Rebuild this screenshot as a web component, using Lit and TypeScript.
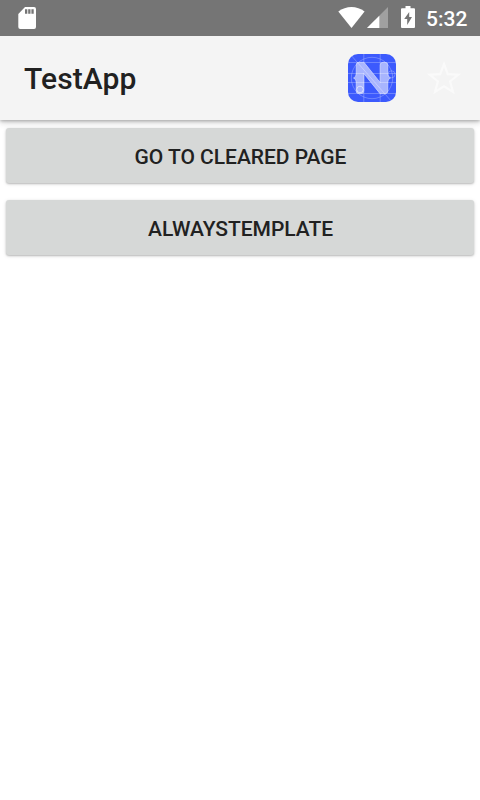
import { LitElement, html, css } from "lit";
import { customElement } from "lit/decorators.js";

@customElement("status-bar")
class StatusBar extends LitElement {
  static styles = css`
    :host {
      display: flex;
      height: 36px;
      box-sizing: border-box;
      background: #757575;
      color: #fff;
      padding: 0 12px 0 18px;
      font: 500 21px/38px Roboto, sans-serif;
    }
    svg { display: block; flex: none; height: 36px; }
    .space { flex: 1; }
    .time { width: 42px; white-space: nowrap; }
    .battery { margin: 0 11px 0 13px; }
    .signal { margin-left: 2px; }
  `;
  render() {
    return html`
      <svg width="18" height="36" viewBox="0 0 18 36">
        <path fill="#fff" fill-rule="evenodd" d="M7 7H16Q18 7 18 9V27Q18 29 16 29H2.300Q.3 29 .3 27V14ZM7 9.300V13.700H9.300V9.300ZM10.200 9.300V13.700H12.500V9.300ZM13.400 9.300V13.700H15.700V9.300Z"/>
      </svg>
      <span class="space"></span>
      <svg width="27" height="36" viewBox="0 0 27 36">
        <path fill="#fff" d="M.3 11.500C8 5.500 19 5.500 26.600 11.500L13.500 28Z"/>
      </svg>
      <svg class="signal" width="21" height="36" viewBox="0 0 21 36">
        <path fill="#a0a0a0" d="M21 7V28H0Z"/>
        <path fill="#fff" d="M12.300 15.700V28H0Z"/>
      </svg>
      <svg class="battery" width="14" height="36" viewBox="0 0 14 36">
        <path fill="#fff" fill-rule="evenodd" d="M4.500 6H9.500V8.200H13Q14 8.200 14 9.200V27Q14 28 13 28H1Q0 28 0 27V9.200Q0 8.200 1 8.200H4.500ZM8.200 12L3.200 19H6.200V25L11 17H8.200Z"/>
      </svg>
      <span class="time">5:32</span>
    `;
  }
}

@customElement("action-bar")
class ActionBar extends LitElement {
  static styles = css`
    :host {
      display: flex;
      align-items: center;
      height: 84px;
      box-sizing: border-box;
      padding: 0 18px 0 24px;
      background: #f4f4f4;
      box-shadow: 0 1px 3px rgba(0, 0, 0, 0.24), 0 3px 6px rgba(0, 0, 0, 0.16);
      clip-path: inset(0 0 -12px 0);
    }
    .title {
      flex: 1;
      color: #212121;
      font: 500 30px/36px Roboto, sans-serif;
      letter-spacing: 0.12px;
      margin-top: 1px;
    }
    svg { display: block; flex: none; }
    .star { margin-left: 30px; }
  `;
  render() {
    return html`
      <span class="title">TestApp</span>
      <svg width="48" height="48" viewBox="0 0 48 48">
        <defs><clipPath id="tile"><rect width="48" height="48" rx="10"/></clipPath></defs>
        <g clip-path="url(#tile)">
          <rect width="48" height="48" fill="#3c5afd"/>
          <g fill="none" stroke="#fff" stroke-opacity=".32" stroke-width=".8">
            <path d="M0 8.500H48M0 19.500H48M0 28.500H48M0 39.500H48M15.800 0V48M32.200 0V48M2 0L44 48"/>
            <circle cx="24" cy="24" r="20.700"/>
            <circle cx="43.500" cy="20.300" r="3.500"/>
          </g>
          <path fill="#b2bdfe" fill-opacity=".92" stroke="#e0e5ff" stroke-opacity=".75" stroke-width=".8" d="M11 8.300H16L32.200 28.500V11Q32.200 8.300 35 8.300H37Q39.800 8.300 39.800 11V20Q39.800 23 42.500 24Q39.800 25 39.800 28V37Q39.800 39.700 37 39.700H32L15.800 19.500V37Q15.800 39.700 13 39.700H11Q8.200 39.700 8.200 37V28Q8.200 25 5.500 24Q8.200 23 8.200 20V11Q8.200 8.300 11 8.300Z"/>
          <path fill="none" stroke="#fff" stroke-opacity=".35" stroke-width=".8" d="M8 19.500H16M8 28.500H16M32 19.500H40M32 28.500H40M9.300 8.300L36.700 39.700"/>
          <circle cx="12" cy="35.500" r="3.300" fill="none" stroke="#fff" stroke-opacity=".7" stroke-width=".8"/>
        </g>
      </svg>
      <svg class="star" width="36" height="36" viewBox="0 0 36 36">
        <path fill="none" stroke="#fafafa" stroke-width="2.200" d="M18 4L21.800 14.100L32.300 14.600L24.100 21.300L27 31.900L18 26.200L9 31.900L11.900 21.300L3.700 14.600L14.200 14.100Z"/>
      </svg>
    `;
  }
}

@customElement("app-root")
class AppRoot extends LitElement {
  static styles = css`
    :host {
      display: flex;
      flex-direction: column;
      height: 800px;
      background: #fff;
      overflow: hidden;
    }
    status-bar, action-bar { flex: none; }
    .content {
      display: flex;
      flex-direction: column;
      gap: 17px;
      padding: 8px 6px;
    }
    button {
      height: 55px;
      border: 0;
      border-radius: 3px;
      padding: 2px 0 0 1px;
      background: #d6d8d7;
      color: #212121;
      font: 500 21px/24px Roboto, sans-serif;
      letter-spacing: -0.03px;
      text-transform: uppercase;
      box-shadow: 0 1px 2px rgba(0, 0, 0, 0.22), 0 1px 4px rgba(0, 0, 0, 0.1);
    }
  `;
  render() {
    return html`
      <status-bar></status-bar>
      <action-bar></action-bar>
      <div class="content">
        <button>Go to cleared page</button>
        <button>alwaysTemplate</button>
      </div>
    `;
  }
}
